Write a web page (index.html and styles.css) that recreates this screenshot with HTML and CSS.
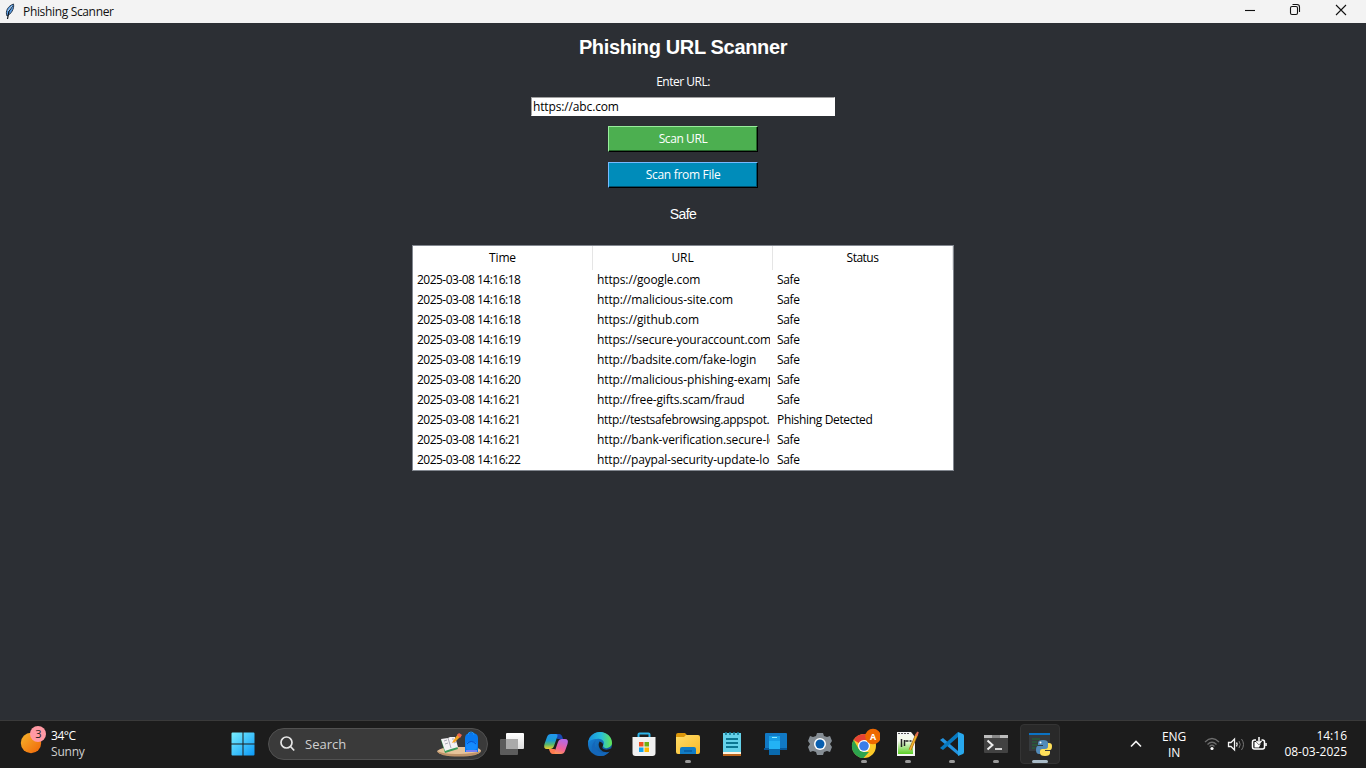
FILE: index.html
```html
<!DOCTYPE html>
<html lang="en">
<head>
<meta charset="utf-8">
<title>Phishing Scanner</title>
<link rel="stylesheet" href="styles.css">
</head>
<body>
<header class="titlebar">
  <svg class="feather" width="12" height="18" viewBox="0 0 12 18"><path d="M3 14C1 9 4 4 9.500 2C10.500 7 7 12 3 14Z" fill="#5b9de4" stroke="#2b3a4c" stroke-width="1"/><path d="M8.500 4L5 9 3.500 17" fill="none" stroke="#101820" stroke-width="1.200"/><path d="M8 4L4 9" stroke="#b7dcff"/></svg>
  <span class="window-name">Phishing Scanner</span>
  <svg class="window-controls" width="104" height="16" viewBox="0 0 104 16" fill="none" stroke="#111" stroke-width="1.100"><path d="M1 8.500H11"/><rect x="46.500" y="4.500" width="7" height="8" rx="1.500"/><path d="M48.500 2.500h4.500q2.500 0 2.500 2.500v5"/><path d="M92 3l10 10m0-10l-10 10"/></svg>
</header>
<main class="app">
  <h1 class="heading">Phishing URL Scanner</h1>
  <label class="url-label" for="url">Enter URL:</label>
  <input class="url-input" id="url" value="https://abc.com">
  <button class="button scan-url">Scan URL</button>
  <button class="button scan-file">Scan from File</button>
  <p class="result">Safe</p>
  <section class="table">
    <div class="row head"><span>Time</span><span>URL</span><span>Status</span></div>
    <div class="row"><span class="time">2025-03-08 14:16:18</span><span>https://google.com</span><span class="status">Safe</span></div>
    <div class="row"><span class="time">2025-03-08 14:16:18</span><span>http://malicious-site.com</span><span class="status">Safe</span></div>
    <div class="row"><span class="time">2025-03-08 14:16:18</span><span>https://github.com</span><span class="status">Safe</span></div>
    <div class="row"><span class="time">2025-03-08 14:16:19</span><span class="snug">https://secure-youraccount.com</span><span class="status">Safe</span></div>
    <div class="row"><span class="time">2025-03-08 14:16:19</span><span>http://badsite.com/fake-login</span><span class="status">Safe</span></div>
    <div class="row"><span class="time">2025-03-08 14:16:20</span><span>http://malicious-phishing-examp</span><span class="status">Safe</span></div>
    <div class="row"><span class="time">2025-03-08 14:16:21</span><span class="snug">http://free-gifts.scam/fraud</span><span class="status">Safe</span></div>
    <div class="row"><span class="time">2025-03-08 14:16:21</span><span class="tight">http://testsafebrowsing.appspot.</span><span class="status">Phishing Detected</span></div>
    <div class="row"><span class="time">2025-03-08 14:16:21</span><span>http://bank-verification.secure-lo</span><span class="status">Safe</span></div>
    <div class="row"><span class="time">2025-03-08 14:16:22</span><span class="snug">http://paypal-security-update-lo</span><span class="status">Safe</span></div>
  </section>
</main>
<footer class="taskbar">
  <div class="weather">
    <svg width="28" height="32" viewBox="0 0 28 32"><defs><linearGradient id="sun" x1="0" y1="0" x2="1" y2="1"><stop stop-color="#f6b62c"/><stop offset="1" stop-color="#f06408"/></linearGradient></defs><circle cx="12" cy="18" r="10.200" fill="url(#sun)"/><circle cx="19" cy="9" r="8" fill="#ff99a4"/><text class="count" x="19.500" y="13" text-anchor="middle">3</text></svg>
    <div class="weather-text"><span class="temp">34°C</span><span class="sky">Sunny</span></div>
  </div>
  <div class="task start"><svg width="24" height="24" viewBox="0 0 24 24"><defs><linearGradient id="win" x1="0" y1="0" x2="1" y2="1"><stop stop-color="#79efff"/><stop offset="1" stop-color="#0b99f7"/></linearGradient></defs><path fill="url(#win)" d="M1.500.500H11.500V11.500H.500V1.500a1 1 0 0 1 1-1ZM12.500.500h10a1 1 0 0 1 1 1v10h-11ZM.500 12.500h11v11h-10a1 1 0 0 1-1-1ZM12.500 12.500h11v10a1 1 0 0 1-1 1h-10Z"/></svg></div>
  <div class="search">
    <svg width="16" height="16" viewBox="0 0 16 16" fill="none" stroke="#e6e6e6" stroke-width="1.700"><circle cx="6.500" cy="6.500" r="5.500"/><path d="M10.500 10.500l3.700 4"/></svg>
    <span class="search-text">Search</span>
    <svg class="supplies" width="46" height="26" viewBox="0 0 46 26"><path d="M1 20Q6 16 16 16h20q9 1 9 4-2 5-22 5T1 20" fill="#e6c39a"/><path d="M1 20q7 3.500 22 3T45 20q-2 5.500-22 5.500T1 20" fill="#bd9268"/><path d="M5 9l13-3 4 12-13 4Z" fill="#3b9b59"/><path d="M5 8l7-1 2-1 5 0 3 10-7 2-6 2Z" fill="#f4f2f4"/><path d="M12 7l3 10M8 10l3-1m-2 4 3-1m4-4 2 0m0 4 2-1" stroke="#aaa9b5"/><path d="M17 10l5-7 3 2-6 6-3 1Z" fill="#f4a421"/><path d="M21 4l2-2 3 2-2 3Z" fill="#ef644e"/><path d="M29 7q0-5 6.500-5t6.500 5v14H29Z" fill="#0879ef"/><path d="M32 4q0-3 3-3t3 3" fill="none" stroke="#1595ff"/><rect x="30" y="11" width="11" height="8" rx="3" fill="#148bff"/><path d="M31 13q4-5 9 0" fill="none" stroke="#0750cb"/><path d="M30 20h11" stroke="#9d83f6" stroke-width="1.500"/></svg>
  </div>
  <nav class="tasks">
    <div class="task"><svg width="26" height="26" viewBox="0 0 26 26"><defs><linearGradient id="tv" x1="0" y1="0" x2="0" y2="1"><stop stop-color="#fff"/><stop offset="1" stop-color="#ddd"/></linearGradient></defs><rect x="7" y="2" width="18" height="16" rx="1" fill="url(#tv)"/><rect x="1" y="8" width="18" height="16" rx="1" fill="#5c5c5c"/><path d="M7 8h12v10H7Z" fill="#aaa"/></svg></div>
    <div class="task"><svg width="26" height="26" viewBox="0 0 26 26"><defs><linearGradient id="ca" x1="0" y1="0" x2="0" y2="1"><stop stop-color="#2196f0"/><stop offset=".45" stop-color="#1c9ed0"/><stop offset=".7" stop-color="#59b86b"/><stop offset="1" stop-color="#f2cf2f"/></linearGradient><linearGradient id="cb" x1="0" y1="1" x2=".3" y2="0"><stop stop-color="#ffa04a"/><stop offset=".45" stop-color="#f0609a"/><stop offset="1" stop-color="#b868e0"/></linearGradient></defs><path d="M12 3h4q3 0 4 5h-5q-2 0-2-3Z" fill="#1748b4"/><path d="M8 3h5q2 0 1.500 2L11 15q-1 3-4 3H4q-4 0-2.500-5L4 6q1-3 4-3" fill="url(#ca)"/><path d="M14 23h-4q-3 0-4-5h5q2 0 2 3Z" fill="#ff7a50"/><path d="M18 23h-5q-2 0-1.500-2L15 11q1-3 4-3h3q4 0 2.500 5L22 20q-1 3-4 3" fill="url(#cb)"/></svg></div>
    <div class="task"><svg width="26" height="26" viewBox="0 0 26 26"><defs><linearGradient id="ea" x1="0" y1="0" x2="1" y2="0"><stop stop-color="#168ede"/><stop offset=".55" stop-color="#28bfd9"/><stop offset="1" stop-color="#65e550"/></linearGradient><linearGradient id="eb" x1="0" y1="0" x2="1" y2="1"><stop stop-color="#1789df"/><stop offset="1" stop-color="#104b91"/></linearGradient></defs><circle cx="13" cy="13" r="12" fill="url(#eb)"/><path d="M1 12C2 5 7 1 13 1c7 0 12 5 12 11 0 5-8 7-9 3 3-5-2-8-6-7-5 0-8 2-9 4" fill="url(#ea)"/><path d="M9 9q-4 8 4 12 5 2 11-3-4 8-12 7C3 23 3 14 9 9" fill="#1467ba"/><path d="M12.500 10.500q4 1 3.500 4-1.500 2.500.500 3.500 3.500 1.500 7.500-.500l1.500 1-2 2q-7 2-10-2-3-4-1-8" fill="#1c1c1c"/></svg></div>
    <div class="task"><svg width="26" height="26" viewBox="0 0 26 26"><path d="M7.500 7V3.500q0-1 1-1h9q1 0 1 1V7" fill="none" stroke="#2db4e9" stroke-width="2"/><path d="M1.500 6h23v16q0 3-3 3h-17q-3 0-3-3Z" fill="#f0f0f0"/><path d="M8 11h4.500v4.500H8Z" fill="#f25022"/><path d="M13.500 11H18v4.500h-4.500Z" fill="#71af13"/><path d="M8 16.500h4.500V21H8Z" fill="#12a3ee"/><path d="M13.500 16.500H18V21h-4.500Z" fill="#ffb900"/></svg></div>
    <div class="task running"><svg width="26" height="26" viewBox="0 0 26 26"><defs><linearGradient id="fo" x1="0" y1="0" x2="1" y2="1"><stop stop-color="#ffdd69"/><stop offset="1" stop-color="#f9b928"/></linearGradient></defs><path d="M1 4q0-2 2-2h7l3 3h-2v4H1Z" fill="#dc9609"/><path d="M1 6h8l2-2h12q2 0 2 2v15q0 2-2 2H3q-2 0-2-2Z" fill="url(#fo)"/><path d="M5 23v-5q0-2 2-2h12q2 0 2 2v5Z" fill="#117cc5"/><path d="M9 20h8" stroke="#075a9f" stroke-width="1.500"/></svg></div>
    <div class="task"><svg width="26" height="26" viewBox="0 0 26 26"><path d="M4 2h18v20H4Z" fill="#64d1e9"/><path d="M4 21h18v2H4Z" fill="#fff3df"/><path d="M4 23h18v2H4Z" fill="#bc651c"/><path d="M7 8h12M7 12h12M7 16h12" stroke="#0b7692" stroke-width="2"/><path d="M7 1v3m4-3v3m4-3v3m4-3v3" stroke="#137b97" stroke-width="1.600"/></svg></div>
    <div class="task"><svg width="26" height="26" viewBox="0 0 26 26"><path d="M2 3q0-1 1-1h20q1 0 1 1v15H2Z" fill="#1179c5"/><path d="M1 17h23v2H1Z" fill="#085697"/><path d="M6 5h11v19H6Z" fill="#179fe7"/><path d="M6 10h11v8H6Z" fill="#23b2f4"/><path d="M6 18h11v6H6Z" fill="#096aae"/><path d="M9 6.500h5" stroke="#8be8ff"/></svg></div>
    <div class="task"><svg width="26" height="26" viewBox="0 0 26 26"><path d="M10 2h6l1 3 3 1 3-1 2 5-2 3 2 3-2 5-3-1-3 1-1 3h-6l-1-3-3-1-3 1-2-5 2-3-2-3 2-5 3 1 3-1Z" fill="#858d94"/><circle cx="13" cy="13" r="6" fill="#fff"/><circle cx="13" cy="13" r="4.500" fill="#075eaf"/></svg></div>
    <div class="task running"><svg width="32" height="32" viewBox="0 0 32 32"><circle cx="16" cy="18" r="12" fill="#fcc928"/><path d="M16 18L5.600 12A12 12 0 0 1 26.400 12H16Z" fill="#e74335"/><path d="M5.600 12l5.200 9 5.200 3-2.500 6A12 12 0 0 1 5.600 12Z" fill="#2da44e"/><path d="M11 21l5 3h5l-5.500 6h-3Z" fill="#2da44e"/><circle cx="16" cy="18" r="6" fill="#fff"/><circle cx="16" cy="18" r="4.800" fill="#397de9"/><circle cx="25" cy="8.500" r="7.800" fill="#ee6900"/><text class="avatar" x="25" y="12" text-anchor="middle">A</text></svg></div>
    <div class="task running"><svg width="26" height="26" viewBox="0 0 26 26"><defs><linearGradient id="pa" x1="0" y1="0" x2="0" y2="1"><stop offset=".3" stop-color="#f6faed"/><stop offset="1" stop-color="#59ce24"/></linearGradient></defs><path d="M2 1h14l4 5v19H2Z" fill="#f5f5f5"/><path d="M3 4h15v19H3Z" fill="url(#pa)"/><path d="M3 2.500h12" stroke="#555" stroke-dasharray="2 1"/><path d="M6.500 8v8m3-7v6m1-5h3m1 0h2" stroke="#222" stroke-width="1.500"/><path d="M15 19l7-16" stroke="#a76316" stroke-width="3"/><path d="M15 19l7-16" stroke="#efb52b" stroke-width="1.700"/><path d="M21 5l2-4" stroke="#df6954" stroke-width="2"/></svg></div>
    <div class="task running"><svg width="26" height="26" viewBox="0 0 26 26"><path d="M1 9l3-2 15 13v4Z" fill="#2493df"/><path d="M1 17l3 2L19 6V1Z" fill="#0879c0"/><path d="M19 1l5 2q1 .500 1 2v16q0 1.500-1 2l-5 2Z" fill="#28a8ed"/></svg></div>
    <div class="task running"><svg width="26" height="26" viewBox="0 0 26 26"><rect x="1" y="4" width="24" height="18" rx="1" fill="#424242"/><path d="M1 4h24v3H1Z" fill="#bcbcbc"/><path d="M9 4h8v3H9Z" fill="#888"/><path d="M4.500 9.500l5 4.500-5 4.500" fill="none" stroke="#eee" stroke-width="2"/><path d="M12 18h7" stroke="#eee" stroke-width="1.700"/></svg></div>
    <div class="task running active"><svg width="26" height="26" viewBox="0 0 26 26"><path d="M2 3h21v17H2Z" fill="#363a3d"/><path d="M2 2h21v2H2Z" fill="#0b73c4"/><path d="M5 8h8M5 11h5M5 14h6M5 17h3" stroke="#285b38" stroke-width="1.300"/><path d="M16 9q-5 0-5 3v2h5v1h-5q-2 0-2 4 0 4 3 4h1v-3q0-2 3-2h3q2 0 2-2v-4q0-3-5-3" fill="#528bb9"/><path d="M18 25q5 0 5-3v-2h-5v-1h5q2 0 2-4 0-3-3-3h-1v3q0 3-3 3h-3q-2 0-2 2v2q0 3 5 3" fill="#ffe05a"/><circle cx="13.500" cy="11.500" r="1" fill="#fff"/></svg></div>
  </nav>
  <div class="tray">
    <svg class="chevron" width="12" height="8" viewBox="0 0 12 8" fill="none" stroke="#f4f4f4" stroke-width="1.600"><path d="M1 6.500l5-5 5 5"/></svg>
    <div class="language"><span>ENG</span><span>IN</span></div>
    <svg class="status-icons" width="64" height="16" viewBox="0 0 64 16" fill="none" stroke-width="1.300"><g stroke="#6d6d6d"><path d="M1 6q7-7 14 0M3.500 8.500q4.500-4.500 9 0M5.500 10.500q2.500-2.500 5 0"/><path d="M35 5q2.500 3.500 0 7M37.500 3q4 5.500 0 11" stroke="#777" stroke-width="1"/></g><circle cx="8" cy="12.500" r="1.600" fill="#fff"/><path d="M24.500 6.500h2.500l3.500-3.500v11l-3.500-3.500h-2.500Z" stroke="#f4f4f4"/><path d="M32.500 6.500q1.500 2 0 4" stroke="#f4f4f4"/><path d="M52 4h-1.500q-2 0-2 2v5q0 2 2 2h8q2 0 2-2V6q0-2-2-2h-1" stroke="#fff" stroke-width="1.500"/><path d="M50.500 6h1.500l3 3 2-2-2 4.500h-4.500Z" fill="#fff"/><path d="M55 1v6m-2.500-2 2.500 2.500 2.500-2.500M62 7v3" stroke="#fff" stroke-width="1.500"/></svg>
    <div class="clock"><span>14:16</span><span class="date">08-03-2025</span></div>
  </div>
</footer>
</body>
</html>
```
FILE: styles.css
```css
* { box-sizing: border-box; }
body { margin: 0; width: 1366px; height: 768px; overflow: hidden; display: grid; grid-template-rows: 23px 697px 48px; background: #2c2f34; font: 12px/20px "Open Sans", "Noto Sans", sans-serif; }
.titlebar { display: flex; align-items: center; background: #f3f3f3; color: #111; }
.feather { margin-left: 4px; margin-top: -1px; }
.window-name { margin-left: 7px; letter-spacing: -.34px; }
.window-controls { margin-left: auto; margin-right: 18px; margin-top: -3px; }
.app { display: flex; flex-direction: column; align-items: center; color: #fff; }
.heading { margin: 13px 0 0; font: bold 20px/23px "Liberation Sans", Arial, sans-serif; letter-spacing: -.35px; }
.url-label { margin-top: 13px; letter-spacing: -.5px; }
.url-input { width: 304px; height: 19px; margin: 5px 0 0; padding: 0 0 0 1px; border: 1px solid #fff; border-top-color: #a0a0a0; border-left-color: #a0a0a0; outline: 0; border-radius: 0; background: #fff; color: #000; font: inherit; letter-spacing: -.14px; }
.button { width: 150px; height: 26px; padding: 0 0 1px; border: 1px solid; border-radius: 0; color: #fff; font: inherit; line-height: 22px; letter-spacing: -.4px; }
.scan-url { margin-top: 10px; background: #4caf50; border-color: #98ee9c #000 #000 #98ee9c; box-shadow: inset -1px -1px #26632b; }
.scan-file { margin-top: 10px; background: #008cba; border-color: #77baff #000 #000 #77baff; box-shadow: inset -1px -1px #00516e; letter-spacing: -.3px; }
.result { margin: 16px 0 0; font: 14px/20px "Liberation Sans", Arial, sans-serif; letter-spacing: -.6px; }
.table { width: 542px; height: 226px; margin-top: 21px; padding: 0; border: 1px solid #82878f; background: #fff; color: #000; }
.row { display: grid; grid-template-columns: repeat(3, 180px); height: 20px; line-height: 20px; }
.row span { margin-left: 4px; width: 173px; overflow: hidden; white-space: nowrap; letter-spacing: -.12px; }
.row .time { letter-spacing: -.52px; }
.row .snug { letter-spacing: -.17px; }
.row .tight { letter-spacing: -.33px; }
.row .status { letter-spacing: -.34px; }
.row.head { height: 24px; line-height: 24px; text-align: center; }
.row.head span { width: 180px; margin: 0; border-right: 1px solid #e5e5e5; }
.row.head span:last-child { letter-spacing: -.5px; }
.taskbar { display: flex; background: #1c1c1c; border-top: 1px solid #3a3a3a; color: #fff; }
.weather { width: 202px; margin-left: 19px; display: flex; padding-top: 4px; }
.weather-text { display: flex; flex-direction: column; margin-left: 4px; line-height: 16px; padding-top: 3px; }
.temp { letter-spacing: -.45px; }
.sky { color: #d0d0d0; letter-spacing: -.2px; }
.count { font: 11px "Open Sans", sans-serif; fill: #222; }
.task { width: 44px; height: 47px; padding-bottom: 1px; display: flex; align-items: center; justify-content: center; position: relative; }
.search { width: 220px; height: 32px; margin: 7px 2px 0 3px; padding: 0 2px 0 11px; display: flex; align-items: center; border: 1px solid #515151; border-radius: 16px; background: #3a3a3a; }
.search-text { margin-left: 9px; font-size: 13px; color: #d0d0d0; }
.supplies { margin-left: auto; margin-right: 3px; }
.tasks { display: flex; }
.running::after { content: ""; position: absolute; left: 19px; bottom: 5px; width: 6px; height: 3px; border-radius: 2px; background: #9a9a9a; }
.active::before { content: ""; position: absolute; inset: 3px 2px 4px; border: 1px solid #343434; border-radius: 4px; background: #292929; }
.active svg { position: relative; }
.active::after { left: 14px; width: 16px; background: #a9bbc8; }
.avatar { font: bold 9px "Open Sans", sans-serif; fill: #fff; }
.tray { flex: 1; display: flex; align-items: center; }
.chevron { margin-left: 68px; margin-top: -2px; }
.language { width: 36px; margin-left: 14px; text-align: center; display: flex; flex-direction: column; line-height: 16px; letter-spacing: -.2px; }
.status-icons { margin-left: 12px; margin-top: -2px; }
.clock { margin-left: auto; margin-right: 19px; margin-top: -1px; text-align: right; display: flex; flex-direction: column; line-height: 16px; }
```
